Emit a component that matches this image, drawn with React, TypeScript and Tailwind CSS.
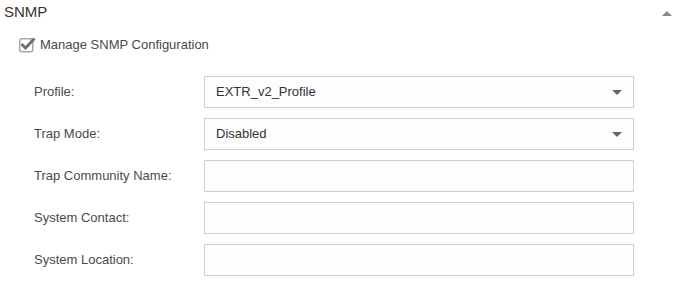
import React from "react";

const rows: { label: string; value?: string; select?: boolean }[] = [
  { label: "Profile:", value: "EXTR_v2_Profile", select: true },
  { label: "Trap Mode:", value: "Disabled", select: true },
  { label: "Trap Community Name:" },
  { label: "System Contact:" },
  { label: "System Location:" },
];

function Caret({ up = false }: { up?: boolean }) {
  return (
    <svg width="10" height="5" viewBox="0 0 10 5" aria-hidden>
      <path d={up ? "M0 5 L5 0 L10 5 Z" : "M0 0 L10 0 L5 5 Z"} fill={up ? "#8a8a8a" : "#666"} />
    </svg>
  );
}

function CheckIcon() {
  return (
    <svg width="18" height="18" viewBox="0 0 18 18" aria-hidden>
      <rect x="1.75" y="2.75" width="13" height="13" rx="2" fill="#fff" stroke="#a8a8a8" strokeWidth="1.5" />
      <path d="M4.5 9 L7.5 12 L15.5 3.5" fill="none" stroke="#6e6e6e" strokeWidth="2.8" strokeLinecap="square" />
    </svg>
  );
}

export default function App() {
  return (
    <div className="h-[287px] w-[681px] overflow-hidden bg-white font-['Liberation_Sans',Arial,sans-serif]">
      {/* Header */}
      <div className="flex items-start justify-between pt-[2px] pl-[4px] pr-[9px]">
        <span className="text-[15px] leading-[20px] text-[#333]">SNMP</span>
        <span className="mt-[9px]">
          <Caret up />
        </span>
      </div>

      {/* Manage checkbox */}
      <label className="mt-[14px] flex items-center gap-[4px] pl-[18px]">
        <CheckIcon />
        <span className="text-[13px] leading-[16px] text-[#4a4a4a]">Manage SNMP Configuration</span>
      </label>

      {/* Fields */}
      <div className="mt-[22px] flex flex-col gap-[10px] pl-[34px]">
        {rows.map((r) => (
          <div key={r.label} className="flex items-center">
            <span className="w-[170px] text-[13px] text-[#4a4a4a]">{r.label}</span>
            <div className="flex h-[32px] w-[430px] items-center justify-between border border-[#cfcfcf] bg-[#fdfdfd] pl-[11px] pr-[11px]">
              <span className="text-[13px] text-[#333]">{r.value ?? ""}</span>
              {r.select && <Caret />}
            </div>
          </div>
        ))}
      </div>
    </div>
  );
}
